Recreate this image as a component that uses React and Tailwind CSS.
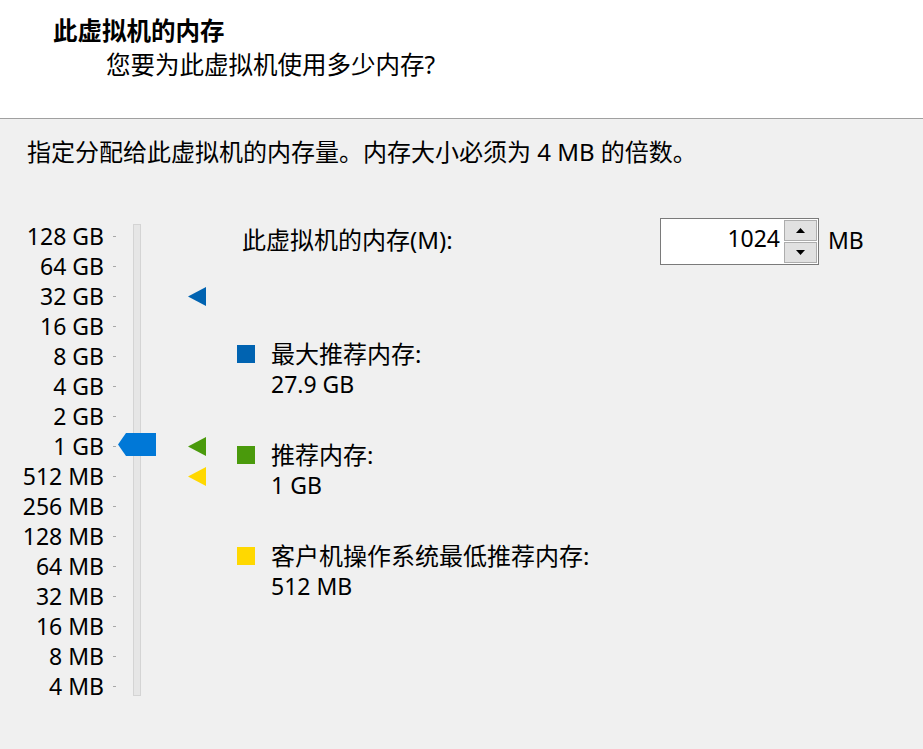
import React from "react";

const labels = [
  "128 GB", "64 GB", "32 GB", "16 GB", "8 GB", "4 GB", "2 GB", "1 GB",
  "512 MB", "256 MB", "128 MB", "64 MB", "32 MB", "16 MB", "8 MB", "4 MB",
];

function Tri({ color }) {
  return (
    <svg width="18" height="19" viewBox="0 0 18 19">
      <polygon points="0,9.5 18,0 18,19" fill={color} />
    </svg>
  );
}

function Legend({ color, title, value }) {
  return (
    <div className="flex flex-row">
      <div className="w-[34px] h-[31px] flex items-center">
        <div className="w-[18px] h-[18px]" style={{ background: color }} />
      </div>
      <div className="flex flex-col">
        <div className="h-[31px] leading-[31px]">{title}</div>
        <div className="h-[30px] leading-[30px] text-[23px]">{value}</div>
      </div>
    </div>
  );
}

export default function App() {
  return (
    <div className="w-[923px] h-[749px] bg-[#f0f0f0] text-black text-[24px] font-['Noto_Sans','Noto_Sans_CJK_SC',sans-serif] overflow-hidden">
      <div className="h-[118px] bg-white border-b border-[#a0a0a0] box-content flex flex-col">
        <div className="pl-[53px] pt-[15px] h-[47px] leading-[32px] font-bold text-[24.5px]">此虚拟机的内存</div>
        <div className="pl-[106px] leading-[36px] text-[24.5px]">您要为此虚拟机使用多少内存?</div>
      </div>

      <div className="pl-[27px] pt-[17px] leading-[32px]">
        指定分配给此虚拟机的内存量。内存大小必须为 4 MB 的倍数。
      </div>

      <div className="mt-[50px] flex flex-row">
        {/* slider */}
        <div className="flex flex-row pt-[3px]">
          <div className="w-[104px] flex flex-col text-[23px]">
            {labels.map((l) => (
              <div key={l} className="h-[30px] flex items-center justify-end leading-none">
                {l}
              </div>
            ))}
          </div>
          <div className="w-[29px] flex flex-col">
            {labels.map((l) => (
              <div key={l} className="h-[30px] flex items-center">
                <div className="ml-[9px] w-[3px] h-px bg-[#a8a8a8]" />
              </div>
            ))}
          </div>
          <div className="relative w-[8px] mt-[3px] h-[472px] bg-[#e6e6e6] border border-[#d4d4d4]">
            <svg
              className="absolute left-[-16px] top-[208px]"
              width="38"
              height="23"
              viewBox="0 0 38 23"
            >
              <polygon points="0,11.5 8,0 38,0 38,23 8,23" fill="#0078d7" />
            </svg>
          </div>
          <div className="ml-[47px] w-[18px] flex flex-col">
            {labels.map((l, i) => (
              <div key={l} className="h-[30px] flex items-center">
                {i === 2 && <Tri color="#0063b1" />}
                {i === 7 && <Tri color="#4a9a0c" />}
                {i === 8 && <Tri color="#ffd800" />}
              </div>
            ))}
          </div>
        </div>

        {/* right content */}
        <div className="ml-[31px] flex flex-col">
          <div className="flex flex-row items-center h-[47px]">
            <div className="w-[423px] pl-[5px] leading-none pb-[4px]">此虚拟机的内存(M):</div>
            <div className="flex flex-row h-[47px] w-[159px] border border-[#7a7a7a] bg-white">
              <div className="flex-1 flex items-center justify-end pr-[3px] leading-none text-[23px] pb-[6px]">1024</div>
              <div className="w-[35px] flex flex-col gap-[1px] p-[1px] bg-white">
                <div className="flex-1 bg-[#e1e1e1] border border-[#adadad] flex items-center justify-center">
                  <svg width="9" height="5" viewBox="0 0 9 5"><polygon points="4.5,0 9,5 0,5" fill="#000" /></svg>
                </div>
                <div className="flex-1 bg-[#e1e1e1] border border-[#adadad] flex items-center justify-center">
                  <svg width="9" height="5" viewBox="0 0 9 5"><polygon points="0,0 9,0 4.5,5" fill="#000" /></svg>
                </div>
              </div>
            </div>
            <div className="ml-[9px] leading-none text-[23px] pb-[2px]">MB</div>
          </div>

          <div className="mt-[73px] flex flex-col gap-[40px]">
            <Legend color="#0063b1" title="最大推荐内存:" value="27.9 GB" />
            <Legend color="#4a9a0c" title="推荐内存:" value="1 GB" />
            <Legend color="#ffd800" title="客户机操作系统最低推荐内存:" value="512 MB" />
          </div>
        </div>
      </div>
    </div>
  );
}
